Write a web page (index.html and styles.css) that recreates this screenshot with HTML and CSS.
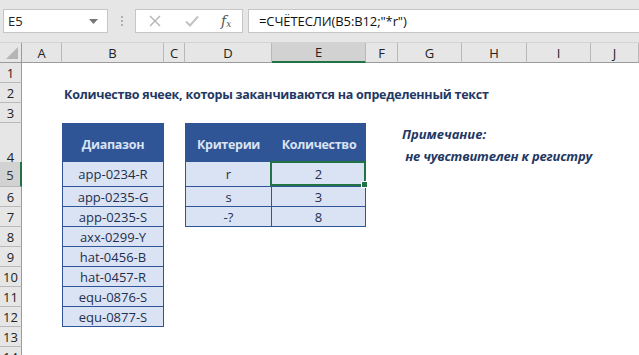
FILE: index.html
```html
<!DOCTYPE html>
<html lang="ru">
<head>
<meta charset="utf-8">
<link rel="stylesheet" href="styles.css">
</head>
<body>
<div class="toolbar">
  <div class="namebox"><span>E5</span><svg class="dd" width="9" height="5" viewBox="0 0 9 5"><path d="M0 0h9L4.5 5z" fill="#777"/></svg></div>
  <div class="dots"><i></i><i></i><i></i></div>
  <div class="fxbox">
    <svg width="12" height="12" viewBox="0 0 12 12"><path d="M1 1L11 11M11 1L1 11" stroke="#b3b3b3" stroke-width="1.4" fill="none"/></svg>
    <svg width="14" height="12" viewBox="0 0 14 12"><path d="M1 6.5L5 10.5L13 1.5" stroke="#c2c2c2" stroke-width="2" fill="none"/></svg>
    <span class="fx">f<sub>x</sub></span>
  </div>
  <div class="formula">=СЧЁТЕСЛИ(B5:B12;"*r")</div>
</div>

<div class="sheet">
  <div class="row colhead">
    <div class="corner"><svg width="12" height="12" viewBox="0 0 12 12"><path d="M12 0V12H0z" fill="#b5b5b5"/></svg></div>
    <div class="ch">A</div><div class="ch">B</div><div class="ch">C</div><div class="ch">D</div><div class="ch sel">E</div><div class="ch">F</div><div class="ch">G</div><div class="ch">H</div><div class="ch">I</div><div class="ch">J</div>
  </div>

  <div class="row"><div class="rh">1</div></div>
  <div class="row"><div class="rh">2</div><div></div><div class="c title">Количество ячеек, которы заканчиваются на определенный текст</div></div>
  <div class="row"><div class="rh">3</div></div>
  <div class="row r4">
    <div class="rh bottom">4</div><div></div>
    <div class="c th">Диапазон</div><div></div>
    <div class="c th">Критерии</div><div class="c th">Количество</div><div></div>
    <div class="c note"><span>Примечание:</span><span class="l2">&nbsp;не чувствителен к регистру</span></div>
  </div>
  <div class="row r5">
    <div class="rh sel">5</div><div></div>
    <div class="c tb">app-0234-R</div><div></div>
    <div class="c td">r</div><div class="c te active">2<span class="selbox"><span class="handle"></span></span></div>
  </div>
  <div class="row">
    <div class="rh">6</div><div></div>
    <div class="c tb">app-0235-G</div><div></div>
    <div class="c td">s</div><div class="c te">3</div>
  </div>
  <div class="row">
    <div class="rh">7</div><div></div>
    <div class="c tb">app-0235-S</div><div></div>
    <div class="c td">-?</div><div class="c te">8</div>
  </div>
  <div class="row"><div class="rh">8</div><div></div><div class="c tb">axx-0299-Y</div></div>
  <div class="row"><div class="rh">9</div><div></div><div class="c tb">hat-0456-B</div></div>
  <div class="row"><div class="rh">10</div><div></div><div class="c tb">hat-0457-R</div></div>
  <div class="row"><div class="rh">11</div><div></div><div class="c tb">equ-0876-S</div></div>
  <div class="row"><div class="rh">12</div><div></div><div class="c tb">equ-0877-S</div></div>
  <div class="row"><div class="rh">13</div></div>
  <div class="row"><div class="rh">14</div></div>
</div>
</body>
</html>
```

FILE: styles.css
```css
* { box-sizing: border-box; }
html, body { margin: 0; padding: 0; }
body {
  width: 639px;
  height: 355px;
  overflow: hidden;
  background: #fff;
  font-family: "Open Sans", "Noto Sans", sans-serif;
  color: #222;
}

/* formula bar */
.toolbar {
  height: 43px;
  background: #e6e6e6;
  border-bottom: 1px solid #d4d4d4;
  display: flex;
  align-items: flex-start;
  padding-top: 9px;
  padding-left: 3px;
  white-space: nowrap;
}
.namebox {
  width: 105px;
  height: 24px;
  background: #fff;
  border: 1px solid #c6c6c6;
  display: flex;
  align-items: center;
  justify-content: space-between;
  padding: 0 9px 0 4px;
  font-size: 13px;
  color: #222;
}
.dots {
  width: 27px;
  height: 24px;
  display: flex;
  flex-direction: column;
  align-items: center;
  justify-content: center;
  gap: 2px;
}
.dots i {
  display: block;
  width: 2px;
  height: 2px;
  background: #b0b0b0;
}
.fxbox {
  width: 108px;
  height: 24px;
  background: #fff;
  border: 1px solid #c6c6c6;
  display: flex;
  align-items: center;
  padding-left: 13px;
  gap: 24px;
}
.fx {
  font-family: "DejaVu Serif", "Liberation Serif", serif;
  font-style: italic;
  font-size: 14px;
  color: #555;
  margin-left: -2px;
}
.fx sub { font-size: 9px; vertical-align: -1px; }
.formula {
  flex: 1;
  margin-left: 5px;
  margin-right: -4px;
  height: 24px;
  background: #fff;
  border: 1px solid #c6c6c6;
  display: flex;
  align-items: center;
  padding-left: 10px;
  font-size: 13px;
  color: #111;
  letter-spacing: -0.1px;
}

/* sheet */
.row {
  display: grid;
  grid-template-columns: 22px 40px 102px 21px 87px 94px 32px 64px 65px 64px 1fr;
  height: 20px;
}
.row.r4 { height: 39px; }
.row.r5 { height: 25px; }

.colhead { background: #e6e6e6; }
.corner {
  border-right: 1px solid #9b9b9b;
  border-bottom: 1px solid #9b9b9b;
  display: flex;
  align-items: flex-end;
  justify-content: flex-end;
  padding: 0 3px 3px 0;
}
.ch {
  border-right: 1px solid #b9b9b9;
  border-bottom: 1px solid #9b9b9b;
  display: flex;
  align-items: center;
  justify-content: center;
  font-size: 13px;
  color: #222;
}
.ch.sel {
  background: #d2d2d2;
  border-bottom: 2px solid #217346;
}

.rh {
  background: #e6e6e6;
  border-right: 1px solid #9b9b9b;
  border-bottom: 1px solid #b9b9b9;
  display: flex;
  align-items: center;
  justify-content: center;
  font-size: 13px;
  color: #222;
}
.rh.bottom { align-items: flex-end; padding-bottom: 1px; }
.rh.sel {
  background: #d2d2d2;
  border-right: 2px solid #217346;
  color: #333;
  padding-top: 2px;
}

.c {
  display: flex;
  align-items: center;
  justify-content: center;
  white-space: nowrap;
  font-size: 13px;
}
.title {
  justify-content: flex-start;
  align-items: flex-end;
  padding-left: 2px;
  font-size: 12.5px;
  letter-spacing: -0.25px;
  font-weight: 700;
  color: #1f3864;
  overflow: visible;
}
.th {
  background: #2f5597;
  color: #dae3f3;
  font-weight: 700;
  font-size: 12.5px;
  letter-spacing: -0.3px;
  padding-bottom: 3px;
}
.tb, .td, .te {
  background: #dae3f3;
  color: #1f2f4f;
  border-bottom: 1px solid #2f5597;
  border-right: 1px solid #2f5597;
}
.tb, .td { border-left: 1px solid #2f5597; }

.note {
  flex-direction: column;
  align-items: flex-start;
  justify-content: center;
  padding-left: 4px;
  font-weight: 700;
  font-style: italic;
  color: #1f3864;
  line-height: 22px;
  padding-bottom: 1px;
}
.note .l2 { letter-spacing: -0.2px; }

.active { position: relative; }
.selbox {
  position: absolute;
  top: -1px;
  left: -2px;
  right: -1px;
  bottom: 0;
  border: 2px solid #217346;
}
.handle {
  position: absolute;
  right: -4px;
  bottom: -4px;
  width: 7px;
  height: 7px;
  background: #217346;
  border: 1px solid #fff;
}
```
